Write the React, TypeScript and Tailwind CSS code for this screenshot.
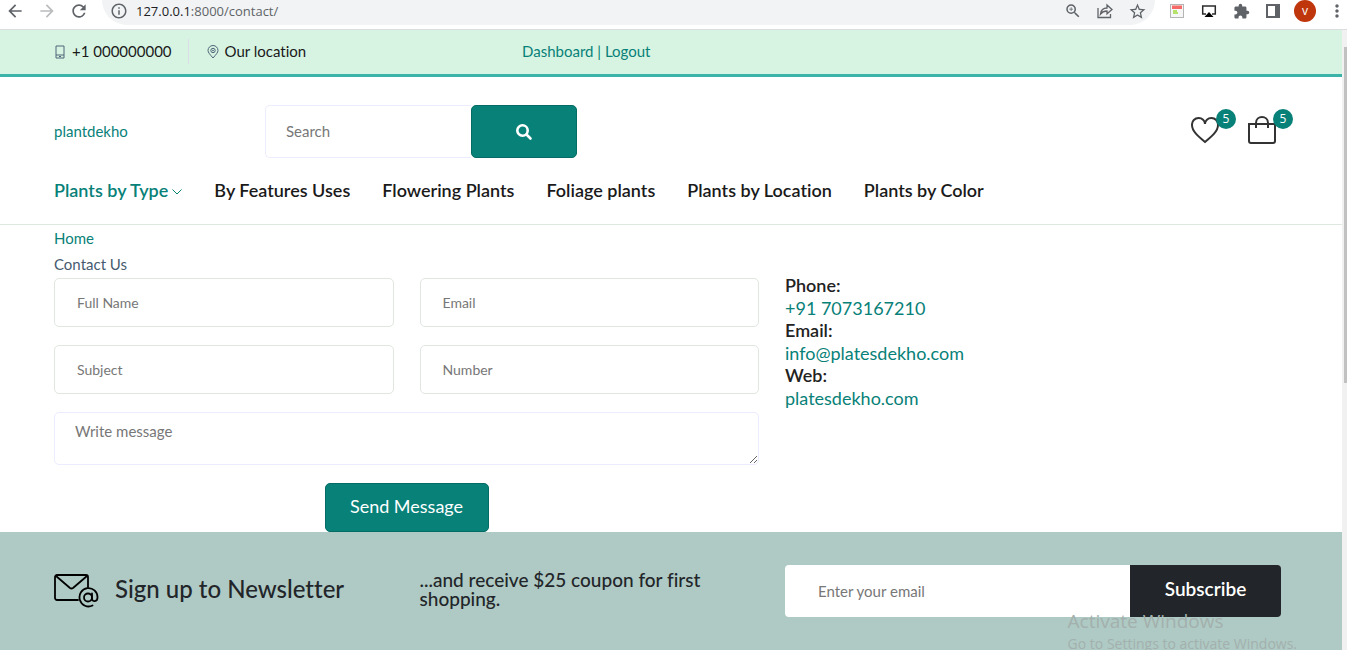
import type { ReactNode } from "react";
import {
  MdArrowBack,
  MdArrowForward,
  MdRefresh,
  MdInfoOutline,
  MdZoomIn,
  MdStarBorder,
  MdExtension,
  MdMoreVert,
} from "react-icons/md";

const field =
  "h-[49px] w-full rounded-[5px] border border-[#e0e6e0] bg-white px-[22px] text-[14px] text-gray-700 placeholder:text-[#777777] outline-none";

function IconButton({ label, children }: { label: string; children: ReactNode }) {
  return (
    <button type="button" aria-label={label} className="flex size-5 shrink-0 items-center justify-center">
      {children}
    </button>
  );
}

function BrowserBar() {
  return (
    <header className="flex h-[30px] shrink-0 items-start border-b border-[#dadce0] bg-white pl-[5px] text-[#5f6368]">
      <div className="flex h-[22px] items-center gap-3">
        <IconButton label="Back"><MdArrowBack size={20} /></IconButton>
        <IconButton label="Forward"><MdArrowForward size={20} className="text-[#babcbe]" /></IconButton>
        <IconButton label="Reload"><MdRefresh size={20} /></IconButton>
      </div>
      <div className="ml-[13px] flex h-[25px] min-w-0 flex-1 items-center rounded-b-full bg-[#f1f3f4] pr-2 pb-[3px] pl-2">
        <MdInfoOutline size={18} className="shrink-0" />
        <p className="ml-2 flex-1 font-['Open_Sans','Noto_Sans',sans-serif] text-[13px] leading-5 text-[#5f6368]">
          <span className="text-[#202124]">127.0.0.1</span>:8000/contact/
        </p>
        <div className="flex items-center gap-3">
          <IconButton label="Zoom"><MdZoomIn size={18} /></IconButton>
          <IconButton label="Share">
            <svg width="16" height="16" viewBox="0 0 16 16" fill="none" stroke="currentColor" strokeWidth="1.3">
              <path d="M1 5v9.5h12.5V11M3.500 11C4 7 6.500 5 10 5V2l5 4.500-5 4.300V8C7 8 5 9 3.500 11Z" />
            </svg>
          </IconButton>
          <IconButton label="Bookmark"><MdStarBorder size={19} /></IconButton>
        </div>
      </div>
      <div className="ml-3 flex h-[22px] items-center gap-3">
        <IconButton label="Form extension">
          <svg width="14" height="14" viewBox="0 0 14 14">
            <rect x=".5" y=".5" width="13" height="13" fill="#f6f6f6" stroke="#b5b5b5" />
            <path d="M2 1.500h10v3.500H2Z" fill="#f56a67" />
            <path d="M3 7h4M3 9h5" stroke="#9fdb3c" strokeWidth="1.300" />
          </svg>
        </IconButton>
        <IconButton label="Cast">
          <svg width="16" height="14" viewBox="0 0 16 14">
            <path d="M5 10H1.700V2h12.600v8H11" fill="none" stroke="#2b2b2b" strokeWidth="1.500" />
            <path d="m3.500 13 4.500-5 4.500 5Z" fill="#000" />
          </svg>
        </IconButton>
        <IconButton label="Extensions"><MdExtension size={17} /></IconButton>
        <IconButton label="Side panel">
          <svg width="14" height="14" viewBox="0 0 14 14">
            <path d="M1 1h12v12H1Z" fill="none" stroke="currentColor" strokeWidth="2" />
            <path d="M9 1h5v12H9Z" fill="currentColor" />
          </svg>
        </IconButton>
        <button type="button" aria-label="Profile" className="-mx-px flex size-[22px] items-center justify-center rounded-full bg-[#bf360c] font-['Open_Sans',sans-serif] text-[12px] leading-none text-white">
          v
        </button>
        <IconButton label="Menu"><MdMoreVert size={20} /></IconButton>
      </div>
    </header>
  );
}

function TopBar() {
  return (
    <div className="grid h-[47px] grid-cols-[468px_1fr] items-center border-b-3 border-[#3bb3a8] bg-[#d7f4e3] pb-px pl-[54px] text-[15px] text-[#1a1a1a]">
      <div className="flex items-center">
        <svg width="12" height="14" viewBox="0 0 12 14" fill="none" stroke="#4f6476">
          <path d="M2 1h8v12H2ZM2 10h8M5 11.500h2" />
        </svg>
        <a href="#phone" className="ml-1.5 border-r border-[#dcdde6] py-px pr-4">+1 000000000</a>
        <svg width="12" height="14" viewBox="0 0 12 14" fill="none" stroke="#4f6476" className="ml-[18px]">
          <path d="M6 13C3 9.500 1 7.500 1 5.500a5 5 0 0 1 10 0C11 7.500 9 9.500 6 13Z" />
          <circle cx="6" cy="5.500" r="2.200" />
          <circle cx="6" cy="5.500" r=".5" />
        </svg>
        <a href="#location" className="ml-1.5">Our location</a>
      </div>
      <p className="text-[#088178]">
        <a href="#dashboard">Dashboard</a> | <a href="#logout">Logout</a>
      </p>
    </div>
  );
}

function Badge() {
  return (
    <span className="absolute -top-[7px] left-[25px] flex size-5 items-center justify-center rounded-full bg-[#088178] font-['Open_Sans',sans-serif] text-[12px] leading-none text-white">
      5
    </span>
  );
}

const links = ["By Features Uses", "Flowering Plants", "Foliage plants", "Plants by Location", "Plants by Color"];

function SiteHeader() {
  return (
    <div className="border-b border-[#dfe8df] pt-7 pr-[65px] pl-[54px]">
      <div className="flex items-center">
        <a href="#home" className="w-[211px] text-[15px] text-[#088178]">plantdekho</a>
        <form className="flex h-[53px]" onSubmit={(e) => e.preventDefault()}>
          <input
            aria-label="Search"
            placeholder="Search"
            className="w-[206px] rounded-l-[5px] border border-r-0 border-[#ececff] px-5 text-[15px] outline-none placeholder:text-[#777777]"
          />
          <button type="submit" aria-label="Search" className="flex w-[106px] items-center justify-center rounded-[5px] border border-[#046c64] bg-[#088178]">
            <svg width="18" height="18" viewBox="0 0 18 18" fill="none" stroke="#fff" strokeWidth="2.600" strokeLinecap="round">
              <circle cx="7.500" cy="7.500" r="5.200" />
              <path d="m11.500 11.500 4 4" />
            </svg>
          </button>
        </form>
        <div className="ml-auto flex gap-[29px] pr-px pb-1">
          <a href="#wishlist" aria-label="Wishlist, 5 items" className="relative block">
            <svg width="28" height="28" viewBox="0 0 28 28" fill="none" stroke="#333" strokeWidth="2">
              <path d="M14 26C8 21 1 15.500 1 9a6.600 6.600 0 0 1 6.700-7C11 2 14 4.500 14 8c0-3.500 3-6 6.300-6A6.600 6.600 0 0 1 27 9c0 6.500-7 12-13 17Z" />
            </svg>
            <Badge />
          </a>
          <a href="#cart" aria-label="Cart, 5 items" className="relative block">
            <svg width="28" height="28" viewBox="0 0 28 28" fill="none" stroke="#333" strokeWidth="2">
              <path d="M1 8h26v17a2 2 0 0 1-2 2H3a2 2 0 0 1-2-2ZM8 12V7c0-8 12-8 12 0v5" />
            </svg>
            <Badge />
          </a>
        </div>
      </div>
      <nav className="flex h-[66px] items-center gap-8 pb-0.5 text-[18px] font-semibold text-[#1a1a1a]">
        <a href="#type" className="flex items-center gap-1 text-[#088178]">
          Plants by Type
          <svg width="10" height="6" viewBox="0 0 10 6" fill="none" stroke="currentColor" className="mt-1">
            <path d="m.5.5 4.500 4.500L9.500.5" />
          </svg>
        </a>
        {links.map((l) => (
          <a key={l} href="#plants">{l}</a>
        ))}
      </nav>
    </div>
  );
}

const contacts = [
  ["Phone:", "+91 7073167210"],
  ["Email:", "info@platesdekho.com"],
  ["Web:", "platesdekho.com"],
];

function Contact() {
  return (
    <main className="pr-[61px] pl-[54px]">
      <nav aria-label="Breadcrumb" className="text-[15px] text-[#465b6f]">
        <a href="#home" className="block w-fit leading-[26px] text-[#088178]">Home</a>
        <span className="block leading-[27px]">Contact Us</span>
      </nav>
      <div className="grid grid-cols-[705fr_496fr] gap-[26px]">
        <form className="flex flex-col gap-[18px]" onSubmit={(e) => e.preventDefault()}>
          <div className="grid grid-cols-2 gap-x-[26px] gap-y-[18px]">
            <input aria-label="Full Name" placeholder="Full Name" className={field} />
            <input aria-label="Email" type="email" placeholder="Email" className={field} />
            <input aria-label="Subject" placeholder="Subject" className={field} />
            <input aria-label="Number" placeholder="Number" className={field} />
          </div>
          <textarea
            aria-label="Write message"
            placeholder="Write message"
            className="block h-[53px] resize rounded-[5px] border border-[#ececff] px-5 py-[7px] text-[15px] outline-none placeholder:text-[#777777]"
          />
          <button type="submit" className="h-[49px] w-[164px] self-center rounded-[5px] border border-[#046c64] bg-[#088178] pb-0.5 text-[18px] text-white">
            Send Message
          </button>
        </form>
        <dl className="text-[18px]">
          {contacts.map(([k, v]) => (
            <div key={k} className="h-[45px]">
              <dt className="leading-[14px] font-semibold text-[#222]">{k}</dt>
              <dd className="leading-[33px]"><a href="#contact" className="text-[#088178]">{v}</a></dd>
            </div>
          ))}
        </dl>
      </div>
    </main>
  );
}

function Newsletter() {
  return (
    <section className="grid flex-1 grid-cols-[705fr_496fr] items-start gap-[26px] bg-[#afcac4] pt-[33px] pr-[61px] pb-[33px] pl-[54px] text-[#222529]">
      <div className="grid grid-cols-2 items-center gap-[26px]">
        <h2 className="flex h-[52px] items-center gap-4 text-[24px] font-medium whitespace-nowrap">
          <svg width="45" height="34" viewBox="0 0 45 34" fill="none" stroke="#000" strokeWidth="1.800" strokeLinecap="round" strokeLinejoin="round">
            <path d="M24 26H3a2 2 0 0 1-2-2V3a2 2 0 0 1 2-2h29a2 2 0 0 1 2 2v10M2 2l14 12q1.500 1 3 0L33 2" />
            <circle cx="34" cy="23.500" r="4" />
            <path d="M38 19.500v5c0 4 5.500 3.500 5.500-1a9 9.200 0 1 0-5 8" />
          </svg>
          <span className="pb-1">Sign up to Newsletter</span>
        </h2>
        <p className="pb-1 text-[19px] leading-[19px] font-medium">...and receive $25 coupon for first shopping.</p>
      </div>
      <form className="flex h-[52px]" onSubmit={(e) => e.preventDefault()}>
        <input
          type="email"
          aria-label="Enter your email"
          placeholder="Enter your email"
          className="min-w-0 flex-1 rounded-l-[4px] bg-white px-[33px] text-[15px] outline-none placeholder:text-[#777777]"
        />
        <button type="submit" className="w-[151px] rounded-r-[4px] bg-[#222529] pb-1 text-[19px] font-semibold text-white">
          Subscribe
        </button>
      </form>
    </section>
  );
}

export default function App() {
  return (
    <div className="relative flex min-h-screen flex-col overflow-hidden bg-white font-['Lato',sans-serif] [font-variant-ligatures:none]">
      <BrowserBar />
      <div className="flex flex-1">
        <div className="flex min-w-0 flex-1 flex-col">
          <TopBar />
          <SiteHeader />
          <Contact />
          <Newsletter />
        </div>
        <div aria-hidden="true" className="w-[5px] bg-[#f1f1f1] pt-[17px] pl-[2px]">
          <div className="h-[336px] bg-[#c1c1c1]" />
        </div>
      </div>
      <aside className="pointer-events-none absolute right-[50px] -bottom-1 font-['Open_Sans','Noto_Sans',sans-serif] text-[#a3b0ad]">
        <p className="text-[19px] leading-[26px]">Activate Windows</p>
        <p className="text-[14px] leading-5">Go to Settings to activate Windows.</p>
      </aside>
    </div>
  );
}
